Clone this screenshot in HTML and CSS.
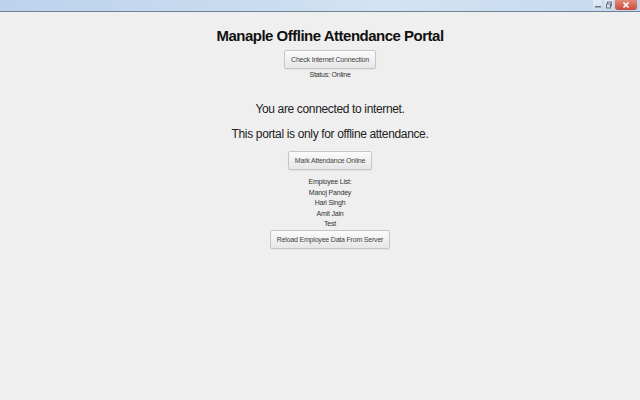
FILE: index.html
```html
<!DOCTYPE html>
<html>
<head>
<meta charset="utf-8">
<title>Manaple Offline Attendance Portal</title>
<link rel="stylesheet" href="styles.css">
</head>
<body>
<div class="titlebar">
  <div class="controls">
    <span class="ctl min"><svg width="8" height="8" viewBox="0 0 8 8"><rect x="1" y="5" width="6" height="1.5" fill="#6b7380"/></svg></span>
    <span class="ctl max"><svg width="8" height="8" viewBox="0 0 8 8"><rect x="2.5" y="1" width="4" height="4" fill="none" stroke="#6b7380" stroke-width="1"/><rect x="1.5" y="3" width="4" height="4" fill="#d9e3ee" stroke="#6b7380" stroke-width="1"/></svg></span>
    <span class="ctl close"><svg width="8" height="8" viewBox="0 0 8 8"><path d="M1.5 1.5 L6.5 6.5 M6.5 1.5 L1.5 6.5" stroke="#fff" stroke-width="1.6"/></svg></span>
  </div>
</div>
<main class="portal">
  <h1 class="title">Manaple Offline Attendance Portal</h1>
  <button class="btn btn-check">Check Internet Connection</button>
  <p class="status">Status: Online</p>
  <p class="msg msg-first">You are connected to internet.</p>
  <p class="msg msg-second">This portal is only for offline attendance.</p>
  <button class="btn btn-mark">Mark Attendance Online</button>
  <ul class="employees">
    <li>Employee List:</li>
    <li>Manoj Pandey</li>
    <li>Hari Singh</li>
    <li>Amit Jain</li>
    <li>Test</li>
  </ul>
  <button class="btn btn-reload">Reload Employee Data From Server</button>
</main>
</body>
</html>
```
FILE: styles.css
```css
html, body {
  margin: 0;
  padding: 0;
  height: 100%;
}
body {
  background: #efefef;
  font-family: "Liberation Sans", Arial, sans-serif;
  color: #333;
}
.titlebar {
  height: 11px;
  border-bottom: 1px solid #6f8196;
  background: linear-gradient(to right, #bcd3ec, #c9dcf0 40%, #d4e3f3 60%, #c3d8ef);
  display: flex;
  justify-content: flex-end;
}
.controls {
  display: flex;
  align-items: flex-start;
  margin-right: 3px;
  gap: 2px;
}
.ctl {
  display: flex;
  align-items: center;
  justify-content: center;
  height: 10px;
}
.ctl.min, .ctl.max {
  width: 9px;
  background: linear-gradient(#e3ecf5, #cddbea);
  border-radius: 0 0 2px 2px;
}
.ctl.close {
  width: 22px;
  background: linear-gradient(#e58a7c, #c94a3a);
  border-radius: 0 0 3px 3px;
}
.portal {
  display: flex;
  flex-direction: column;
  align-items: center;
  padding-left: 20px;
}
.title {
  margin: 14px 0 0;
  font-size: 15px;
  line-height: 19px;
  letter-spacing: -0.5px;
  font-weight: bold;
  color: #111;
}
.btn {
  font-family: "Liberation Sans", Arial, sans-serif;
  font-size: 7px;
  letter-spacing: -0.2px;
  line-height: 17px;
  height: 19px;
  padding: 0 6px;
  color: #444;
  background: linear-gradient(#fbfbfb, #e6e6e6);
  border: 1px solid #c6c6c6;
  border-radius: 2px;
  box-shadow: 0 1px 1px rgba(0,0,0,0.06);
}
.btn-check {
  margin-top: 5px;
}
.status {
  margin: 1px 0 0;
  font-size: 7px;
  line-height: 10px;
  letter-spacing: -0.2px;
}
.msg {
  margin: 0;
  font-size: 12px;
  line-height: 16px;
  letter-spacing: -0.35px;
  color: #222;
}
.msg-first {
  margin-top: 21px;
}
.msg-second {
  margin-top: 9px;
}
.btn-mark {
  margin-top: 9px;
}
.employees {
  list-style: none;
  margin: 7px 0 0;
  padding: 0;
  font-size: 7px;
  line-height: 10.6px;
  letter-spacing: -0.2px;
  text-align: center;
}
.btn-reload {
  margin-top: 0;
}
```
